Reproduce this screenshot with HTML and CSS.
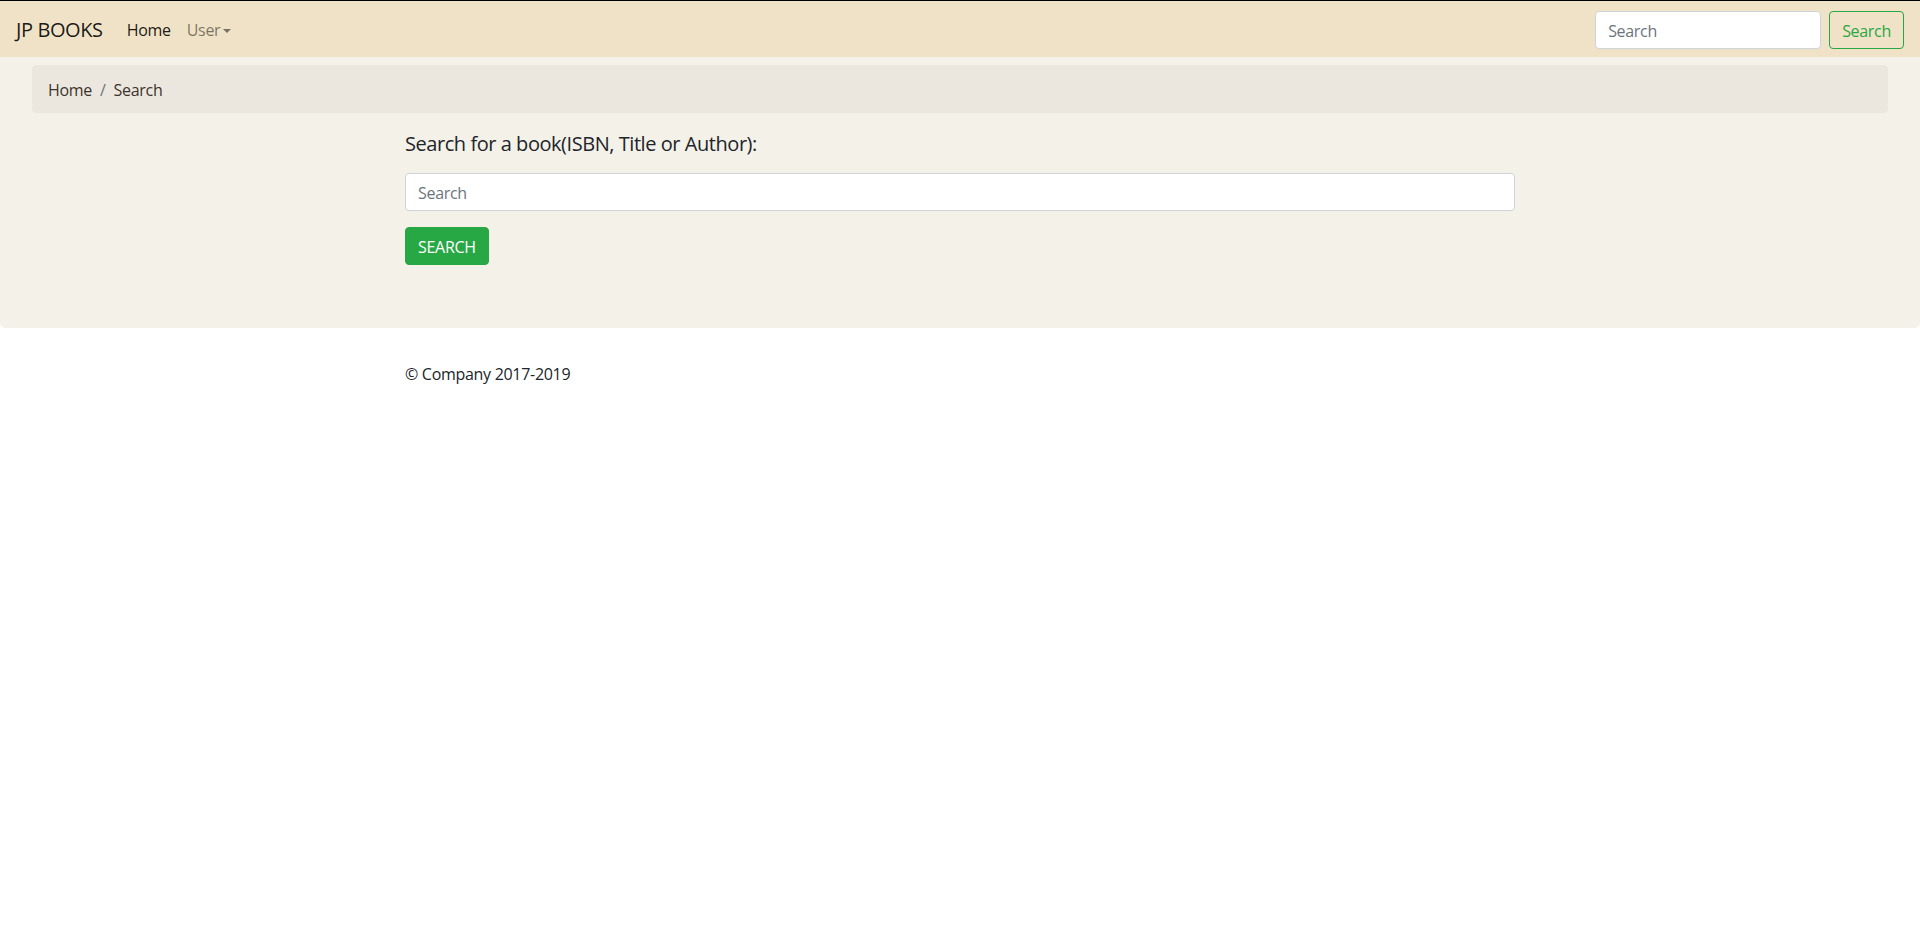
FILE: index.html
```html
<!DOCTYPE html>
<html lang="en">

<head>
  <meta charset="utf-8">
  <meta name="viewport" content="width=device-width, initial-scale=1.0">
  <title>Search - JP Books</title>
  <link rel="stylesheet" href="styles.css">
</head>

<body>
  <nav class="navbar">
    <a class="navbar-brand" href="#">JP BOOKS</a>
    <ul class="navbar-nav">
      <li><a class="nav-link active" href="#">Home</a></li>
      <li><a class="nav-link dropdown-toggle" href="#">User</a></li>
    </ul>
    <form class="form-inline">
      <input type="search" class="form-control nav-search" placeholder="Search">
      <button type="submit" class="btn btn-outline-success">Search</button>
    </form>
  </nav>

  <div class="jumbotron">
    <ol class="breadcrumb">
      <li class="breadcrumb-item"><a href="#">Home</a></li>
      <li class="breadcrumb-item active">Search</li>
    </ol>

    <div class="container">
      <form>
        <label class="search-label" for="query">Search for a book(ISBN, Title or Author):</label>
        <div class="form-group">
          <input type="text" id="query" class="form-control" placeholder="Search">
        </div>
        <button type="submit" class="btn btn-success">SEARCH</button>
      </form>
    </div>
  </div>

  <footer class="container footer">
    <p>&copy; Company 2017-2019</p>
  </footer>
</body>

</html>
```

FILE: styles.css
```css
html,
body {
  margin: 0;
  padding: 0;
}

body {
  font-family: "Segoe UI", "Open Sans", "Noto Sans", sans-serif;
  font-size: 16px;
  line-height: 1.5;
  letter-spacing: -0.3px;
  color: #212529;
  background-color: #ffffff;
  border-top: 1px solid #000000;
}

a {
  text-decoration: none;
}

.container {
  max-width: 1110px;
  margin: 0 auto;
  padding: 0 15px;
}

/* navbar */

.navbar {
  display: flex;
  align-items: center;
  height: 56px;
  padding: 1px 16px 0;
  box-sizing: border-box;
  background-color: #efe2c6;
}

.navbar-brand {
  font-size: 20px;
  letter-spacing: -0.4px;
  color: rgba(0, 0, 0, 0.9);
  margin-right: 16px;
}

.navbar-nav {
  display: flex;
  list-style: none;
  margin: 0;
  padding: 0;
  flex: 1;
}

.nav-link {
  display: block;
  padding: 8px;
  color: rgba(0, 0, 0, 0.5);
}

.nav-link.active {
  color: rgba(0, 0, 0, 0.9);
}

.dropdown-toggle::after {
  content: "";
  display: inline-block;
  margin-left: 3px;
  vertical-align: 3px;
  border-top: 4px solid;
  border-right: 4px solid transparent;
  border-left: 4px solid transparent;
}

.form-inline {
  display: flex;
  align-items: center;
  gap: 8px;
}

.form-control {
  display: block;
  width: 100%;
  height: 38px;
  padding: 7px 12px 5px;
  box-sizing: border-box;
  font-family: inherit;
  font-size: 16px;
  letter-spacing: -0.3px;
  color: #495057;
  background-color: #ffffff;
  border: 1px solid #ced4da;
  border-radius: 4px;
}

.form-control::placeholder {
  color: #6c757d;
}

.nav-search {
  width: 226px;
}

.btn {
  display: inline-block;
  height: 38px;
  padding: 7px 12px 5px;
  box-sizing: border-box;
  font-family: inherit;
  font-size: 16px;
  line-height: 1.5;
  letter-spacing: -0.3px;
  border: 1px solid transparent;
  border-radius: 4px;
  cursor: pointer;
}

.btn-outline-success {
  color: #28a745;
  background-color: transparent;
  border-color: #28a745;
}

.btn-success {
  color: #ffffff;
  background-color: #28a745;
  border-color: #28a745;
}

/* main block */

.jumbotron {
  background-color: #f4f1e9;
  padding: 8px 32px 63px;
  border-radius: 0 0 5px 5px;
}

.jumbotron .container {
  padding: 0;
}

.breadcrumb {
  display: flex;
  list-style: none;
  margin: 0 0 16px;
  padding: 13px 16px 11px;
  background-color: #ebe7df;
  border-radius: 4px;
}

.breadcrumb-item a,
.breadcrumb-item.active {
  color: #3d342b;
}

.breadcrumb-item + .breadcrumb-item::before {
  content: "/";
  padding: 0 8px;
  color: #6c757d;
}

.search-label {
  display: block;
  font-size: 20px;
  line-height: 30px;
  letter-spacing: -0.45px;
  margin-bottom: 14px;
}

.form-group {
  margin-bottom: 16px;
}

/* footer */

.footer {
  padding-top: 34px;
}

.footer p {
  margin: 0;
}
```
